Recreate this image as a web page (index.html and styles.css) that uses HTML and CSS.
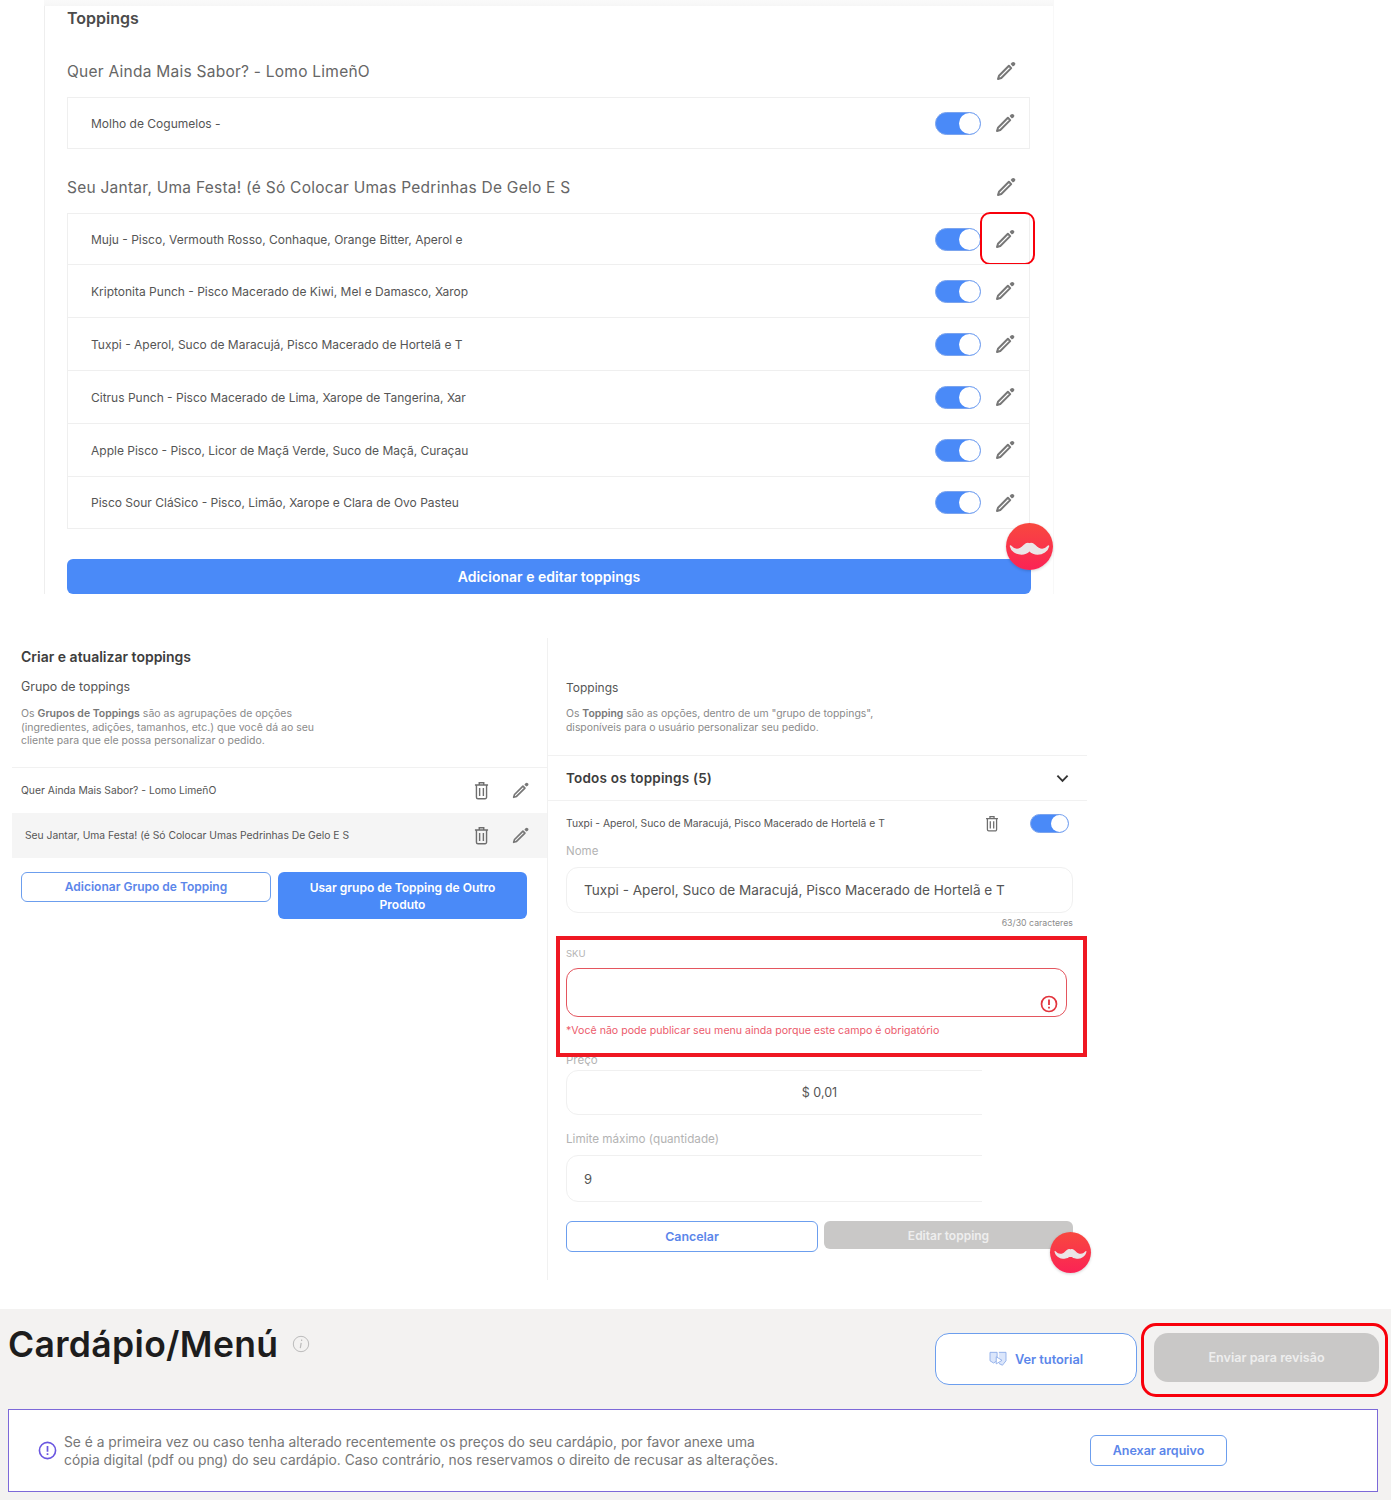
FILE: index.html
```html
<!DOCTYPE html>
<html lang="pt">
<head>
<meta charset="utf-8">
<title>Cardápio</title>
<link rel="stylesheet" href="styles.css">
</head>
<body>
<svg class="defs" width="0" height="0" aria-hidden="true">
  <symbol id="pencil" viewBox="0 0 20 20">
    <path d="M2 18 3 14.700 12.900 4.800 15.200 7.100 5.300 17Z" fill="none" stroke="currentColor" stroke-width="2" stroke-linejoin="round"/>
    <path d="M14.600 3.100 15.900 1.600a2 2 0 0 1 2.700-.2a2 2 0 0 1 0 2.900L16.900 5.400Z" fill="currentColor"/>
  </symbol>
  <symbol id="trash" viewBox="0 0 16 20">
    <path d="M1 4.200h14M5.600 4V1.800h4.800V4M2.600 4.400v12.800a1.600 1.600 0 0 0 1.600 1.600h7.600a1.600 1.600 0 0 0 1.600-1.600V4.400M6 7.400v8.400M10 7.400v8.400" fill="none" stroke="currentColor" stroke-width="1.500"/>
  </symbol>
  <symbol id="stache" viewBox="0 0 40 16">
    <path d="M1 7c3 3.500 7 4 10 2.500 4-2 5.500-7 9-4.500 3.500-2.500 5 2.500 9 4.500 3 1.500 7 1 10-2.500-1 5-6 8-11 8-3.500 0-6-1.500-8-3.500-2 2-4.500 3.500-8 3.500C7 15 2 12 1 7Z" fill="currentColor" stroke="currentColor" stroke-width="1.500" stroke-linejoin="round"/>
  </symbol>
</svg>

<main class="page">
  <section class="sheet-a">
    <h2 class="sheet-a-title">Toppings</h2>

    <div class="group-head">
      <span>Quer Ainda Mais Sabor? - Lomo LimeñO</span>
      <svg class="ico-pencil"><use href="#pencil"/></svg>
    </div>
    <div class="card">
      <div class="row row-first">
        <span>Molho de Cogumelos -</span>
        <span class="toggle"></span>
        <svg class="ico-pencil"><use href="#pencil"/></svg>
      </div>
    </div>

    <div class="group-head group-head-second">
      <span>Seu Jantar, Uma Festa! (é Só Colocar Umas Pedrinhas De Gelo E S</span>
      <svg class="ico-pencil"><use href="#pencil"/></svg>
    </div>
    <div class="card">
      <div class="row row-first">
        <span>Muju - Pisco, Vermouth Rosso, Conhaque, Orange Bitter, Aperol e</span>
        <span class="toggle"></span>
        <svg class="ico-pencil"><use href="#pencil"/></svg>
        <span class="mark mark-pencil"></span>
      </div>
      <div class="row">
        <span>Kriptonita Punch - Pisco Macerado de Kiwi, Mel e Damasco, Xarop</span>
        <span class="toggle"></span>
        <svg class="ico-pencil"><use href="#pencil"/></svg>
      </div>
      <div class="row">
        <span>Tuxpi - Aperol, Suco de Maracujá, Pisco Macerado de Hortelã e T</span>
        <span class="toggle"></span>
        <svg class="ico-pencil"><use href="#pencil"/></svg>
      </div>
      <div class="row">
        <span>Citrus Punch - Pisco Macerado de Lima, Xarope de Tangerina, Xar</span>
        <span class="toggle"></span>
        <svg class="ico-pencil"><use href="#pencil"/></svg>
      </div>
      <div class="row">
        <span>Apple Pisco - Pisco, Licor de Maçã Verde, Suco de Maçã, Curaçau</span>
        <span class="toggle"></span>
        <svg class="ico-pencil"><use href="#pencil"/></svg>
      </div>
      <div class="row row-last">
        <span>Pisco Sour CláSico - Pisco, Limão, Xarope e Clara de Ovo Pasteu</span>
        <span class="toggle"></span>
        <svg class="ico-pencil"><use href="#pencil"/></svg>
      </div>
    </div>
    <button class="btn-wide">Adicionar e editar toppings</button>
    <span class="fab fab-a"><svg class="stache"><use href="#stache"/></svg></span>
  </section>

  <section class="sheet-b">
    <div class="col-left">
      <h2 class="col-title">Criar e atualizar toppings</h2>
      <h3 class="sub">Grupo de toppings</h3>
      <p class="hint hint-left">Os <b>Grupos de Toppings</b> são as agrupações de opções (ingredientes, adições, tamanhos, etc.) que você dá ao seu cliente para que ele possa personalizar o pedido.</p>
      <div class="list">
        <div class="list-row">
          <span>Quer Ainda Mais Sabor? - Lomo LimeñO</span>
          <svg class="ico-trash"><use href="#trash"/></svg>
          <svg class="ico-pencil"><use href="#pencil"/></svg>
        </div>
        <div class="list-row list-row-active">
          <span>Seu Jantar, Uma Festa! (é Só Colocar Umas Pedrinhas De Gelo E S</span>
          <svg class="ico-trash"><use href="#trash"/></svg>
          <svg class="ico-pencil"><use href="#pencil"/></svg>
        </div>
      </div>
      <div class="left-actions">
        <button class="btn-line btn-add">Adicionar Grupo de Topping</button>
        <button class="btn-fill btn-use">Usar grupo de Topping de Outro Produto</button>
      </div>
    </div>

    <div class="col-right">
      <h3 class="sub sub-right">Toppings</h3>
      <p class="hint hint-right">Os <b>Topping</b> são as opções, dentro de um "grupo de toppings", disponíveis para o usuário personalizar seu pedido.</p>
      <div class="accordion">
        <span>Todos os toppings (5)</span>
        <svg class="chev" viewBox="0 0 14 9"><path d="M1.500 1.500 7 7l5.500-5.500" fill="none" stroke="currentColor" stroke-width="2"/></svg>
      </div>
      <div class="form">
        <div class="form-head">
          <span>Tuxpi - Aperol, Suco de Maracujá, Pisco Macerado de Hortelã e T</span>
          <svg class="ico-trash"><use href="#trash"/></svg>
          <span class="toggle toggle-sm"></span>
        </div>
        <label class="lbl lbl-name">Nome</label>
        <div class="field field-name">Tuxpi - Aperol, Suco de Maracujá, Pisco Macerado de Hortelã e T</div>
        <div class="counter">63/30 caracteres</div>
        <label class="lbl lbl-sku">SKU</label>
        <div class="field field-sku">
          <svg class="alert" viewBox="0 0 18 18"><circle cx="9" cy="9" r="7.500" fill="none" stroke="currentColor" stroke-width="1.700"/><path d="M9 4.500v5.500M9 11.800v1.700" stroke="currentColor" stroke-width="1.800"/></svg>
        </div>
        <div class="error">*Você não pode publicar seu menu ainda porque este campo é obrigatório</div>
        <label class="lbl lbl-price">Preço</label>
        <div class="field field-open field-price">$ 0,01</div>
        <label class="lbl lbl-limit">Limite máximo (quantidade)</label>
        <div class="field field-open field-limit">9</div>
        <div class="form-actions">
          <button class="btn-line btn-cancel">Cancelar</button>
          <button class="btn-gray btn-edit">Editar topping</button>
        </div>
      </div>
      <span class="mark mark-sku"></span>
      <span class="fab fab-b"><svg class="stache"><use href="#stache"/></svg></span>
    </div>
  </section>

  <section class="sheet-c">
    <header class="menu-head">
      <h1 class="menu-title">Cardápio/Menú</h1>
      <svg class="title-info" viewBox="0 0 18 18"><circle cx="9" cy="9" r="7.700" fill="none" stroke="currentColor" stroke-width="1"/><path d="M9.600 4.600v1.500M9.200 7.800 8.300 13.200" stroke="currentColor" stroke-width="1.200"/></svg>
      <button class="btn-line btn-tutorial">
        <svg class="tut-ico" viewBox="0 0 20 18"><path d="M1 1.500h8v9.500l-4 2.500-4-2.500ZM11 1.500h8V11l-4 5-4-2" fill="#dbe6fb" stroke="currentColor" stroke-width="1"/><path d="M8 6.500 14.500 10.500 8 14.500Z" fill="#fff" stroke="currentColor" stroke-width="1"/></svg>
        Ver tutorial
      </button>
      <button class="btn-gray btn-send">Enviar para revisão</button>
      <span class="mark mark-send"></span>
    </header>
    <div class="banner">
      <svg class="banner-ico" viewBox="0 0 20 20"><circle cx="10" cy="10" r="8.500" fill="none" stroke="currentColor" stroke-width="1.700"/><path d="M10 5.200v6M10 13v1.800" stroke="currentColor" stroke-width="1.800"/></svg>
      <p class="banner-text">Se é a primeira vez ou caso tenha alterado recentemente os preços do seu cardápio, por favor anexe uma cópia digital (pdf ou png) do seu cardápio. Caso contrário, nos reservamos o direito de recusar as alterações.</p>
      <button class="btn-line btn-attach">Anexar arquivo</button>
    </div>
  </section>
</main>
</body>
</html>
```
FILE: styles.css
```css
* { box-sizing: border-box; }
html, body { margin: 0; padding: 0; background: #fff; }
body { font-family: Inter, "Liberation Sans", sans-serif; color: #555; width: 1391px; height: 1509px; overflow: hidden; }
h1, h2, h3, p { margin: 0; }
button { font-family: inherit; cursor: pointer; padding: 0; }
.defs { position: absolute; }
.page { display: flex; flex-direction: column; }

/* icons */
.ico-pencil { width: 20px; height: 20px; color: #777; flex: none; }
.ico-trash { width: 15px; height: 19px; color: #6e6e6e; flex: none; }
.toggle { display: block; position: relative; width: 46px; height: 23px; border-radius: 12px; background: #4a8af8; border: 1px solid #7ba4ee; flex: none; }
.toggle::after { content: ""; position: absolute; right: 0; top: 0; width: 21px; height: 21px; border-radius: 50%; background: #fff; }
.toggle-sm { width: 39px; height: 19px; }
.toggle-sm::after { width: 17px; height: 17px; }
.fab { position: absolute; display: flex; align-items: center; justify-content: center; border-radius: 50%; background: linear-gradient(#f8483f, #fb2355); box-shadow: 0 1px 3px rgba(0,0,0,.18); color: #ebe6e8; }
.stache { display: block; }
.mark { position: absolute; border-style: solid; border-color: #f8000b; pointer-events: none; }

/* first sheet */
.sheet-a { position: relative; width: 1054px; height: 594px; padding: 0 23px 0 67px; margin-bottom: 44px; border-right: 1px solid #f8f8f8; }
.sheet-a::before { content: ""; position: absolute; left: 44px; top: 0; bottom: 0; width: 1px; background: #eeeeee; }
.sheet-a::after { content: ""; position: absolute; left: 44px; right: 0; top: 0; height: 6px; background: linear-gradient(#fafafa, #f6f6f6); }
.sheet-a-title { height: 35px; padding-top: 8px; font-size: 16px; line-height: 20px; font-weight: 600; color: #4b4b4b; }
.group-head { display: flex; align-items: center; justify-content: space-between; height: 62px; padding: 10px 14px 0 0; font-size: 15.500px; color: #666; letter-spacing: .25px; }
.group-head-second { height: 64px; padding-top: 12px; }
.card { border: 1px solid #efefef; }
.row { position: relative; display: flex; align-items: center; height: 53px; padding: 0 14px 0 23px; border-top: 1px solid #efefef; font-size: 12px; color: #555; }
.row-first { border-top: 0; height: 50px; }
.row-last { height: 52px; }
.row > span:first-child { flex: 1; }
.row .toggle { margin-right: 14px; }
.mark-pencil { right: -6px; top: -2px; width: 55px; height: 53px; border-width: 2.500px; border-radius: 10px; }
.btn-wide { display: block; width: 964px; height: 35px; margin-top: 30px; border: 0; border-radius: 6px; background: #4a8af8; color: #fff; font-size: 14px; font-weight: 600; }
.fab-a { left: 1006px; top: 523px; width: 47px; height: 47px; }
.fab-a .stache { width: 41px; height: 16px; }

/* second sheet */
.sheet-b { display: flex; width: 1087px; height: 642px; margin-bottom: 29px; }
.col-left { width: 547px; padding-top: 10px; }
.col-title { margin-left: 21px; font-size: 14px; line-height: 18px; font-weight: 600; color: #3d3d3d; }
.sub { font-size: 12.400px; line-height: 16px; font-weight: 400; color: #555; }
.col-left .sub { margin: 13px 0 0 21px; }
.hint { font-size: 10.500px; line-height: 13.500px; color: #8a8a8a; }
.hint b { font-weight: 600; color: #777; }
.hint-left { width: 310px; margin: 12px 0 0 21px; }
.list { margin: 19px 0 0 12px; }
.list-row { display: flex; align-items: center; height: 46px; padding: 0 18px 0 9px; border-top: 1px solid #f1f1f1; font-size: 10.300px; color: #555; }
.list-row span { flex: 1; }
.list-row .ico-trash { margin-right: 23px; }
.list-row .ico-pencil { width: 17px; height: 17px; }
.list-row-active { height: 45px; background: #f5f5f5; padding-left: 13px; border-top: 0; }
.left-actions { display: flex; gap: 7px; margin: 14px 0 0 21px; align-items: flex-start; }
.btn-line { border: 1px solid #6c9eee; border-radius: 6px; background: #fff; color: #5b86ea; font-weight: 600; }
.btn-fill { border: 0; border-radius: 6px; background: #4a8af8; color: #fff; font-weight: 600; }
.btn-gray { border: 0; border-radius: 6px; background: #c9c8c7; color: #eeeeee; font-weight: 600; }
.btn-add { width: 250px; height: 30px; font-size: 12px; }
.btn-use { width: 249px; height: 47px; padding: 1px 24px 0; font-size: 12px; line-height: 17px; }

.col-right { position: relative; width: 540px; border-left: 1px solid #f1f1f1; padding-top: 42px; }
.sub-right { margin-left: 18px; font-size: 12px; }
.hint-right { width: 330px; margin: 11px 0 0 18px; font-size: 10.400px; }
.accordion { display: flex; align-items: center; justify-content: space-between; height: 46px; margin-top: 21px; padding: 0 18px; border-top: 1px solid #f1f1f1; border-bottom: 1px solid #f1f1f1; font-size: 13.500px; font-weight: 600; color: #3d3d3d; letter-spacing: .2px; }
.chev { width: 13px; height: 9px; color: #333; }
.form { padding: 0 14px 0 18px; }
.form-head { display: flex; align-items: center; height: 44px; font-size: 10.300px; color: #555; }
.form-head span:first-child { flex: 1; }
.form-head .ico-trash { margin-right: 31px; width: 14px; height: 17px; }
.form-head .toggle { margin-right: 4px; }
.lbl { display: block; font-size: 11.500px; line-height: 14px; color: #b3b3b3; }
.lbl-name { margin-top: -1px; }
.field { position: relative; border: 1px solid #f0f0f0; border-radius: 12px; background: #fff; font-size: 13.600px; color: #555; display: flex; align-items: center; padding-left: 17px; }
.field-name { width: 507px; height: 46px; margin-top: 9px; }
.counter { margin-top: 5px; font-size: 8.750px; line-height: 11px; text-align: right; color: #8c8c8c; }
.lbl-sku { margin-top: 18px; font-size: 9.500px; }
.field-sku { width: 501px; height: 49px; margin-top: 7px; border-color: #e4565f; }
.alert { position: absolute; right: 8px; bottom: 3px; width: 18px; height: 18px; color: #e2343d; }
.error { margin-top: 7px; font-size: 10.600px; line-height: 14px; color: #ec5b6c; }
.lbl-price { margin-top: 15px; height: 7px; }
.field-open { width: 507px; border-radius: 12px; clip-path: inset(-1px 91px -1px -1px); }
.field-price { height: 45px; margin-top: 10px; justify-content: center; padding-left: 0; font-size: 12.500px; }
.lbl-limit { margin-top: 17px; font-size: 11.700px; }
.field-limit { height: 47px; margin-top: 9px; font-size: 13px; }
.form-actions { display: flex; gap: 6px; margin-top: 19px; align-items: flex-start; }
.btn-cancel { width: 252px; height: 31px; font-size: 12.400px; }
.btn-edit { width: 249px; height: 28px; font-size: 12px; }
.mark-sku { left: 8px; top: 298px; width: 531px; height: 121px; border-width: 4px; border-color: #ef1822; }
.fab-b { left: 502px; top: 594px; width: 41px; height: 41px; }
.fab-b .stache { width: 33px; height: 13px; }

/* third sheet */
.sheet-c { height: 191px; background: #f3f2f1; padding: 0 12px 8px 8px; }
.menu-head { position: relative; display: flex; align-items: flex-start; height: 100px; }
.menu-title { margin-top: 13px; font-size: 35.500px; line-height: 46px; font-weight: 600; color: #1d1d1d; letter-spacing: .33px; }
.title-info { width: 18px; height: 18px; margin: 26px 0 0 14px; color: #bbb; flex: none; }
.btn-tutorial { display: flex; align-items: center; justify-content: center; gap: 8px; width: 202px; height: 52px; margin: 24px 0 0 auto; border-radius: 14px; font-size: 12.800px; }
.tut-ico { width: 18px; height: 16px; color: #8cabe8; }
.btn-send { width: 225px; height: 49px; margin: 24px 0 0 17px; border-radius: 14px; font-size: 12.600px; }
.mark-send { right: -9px; top: 14px; width: 247px; height: 74px; border-width: 3.500px; border-radius: 15px; }
.banner { display: flex; align-items: center; height: 83px; margin-right: 1px; padding: 0 150px 0 29px; background: #fff; border: 1px solid #7c69d8; }
.banner-ico { width: 19px; height: 19px; color: #6a56e0; flex: none; }
.banner-text { width: 730px; margin: 1px 0 0 7px; font-size: 13.800px; line-height: 18px; color: #777; }
.btn-attach { width: 137px; height: 31px; margin-left: auto; font-size: 12.500px; flex: none; border-radius: 6px; }
```
